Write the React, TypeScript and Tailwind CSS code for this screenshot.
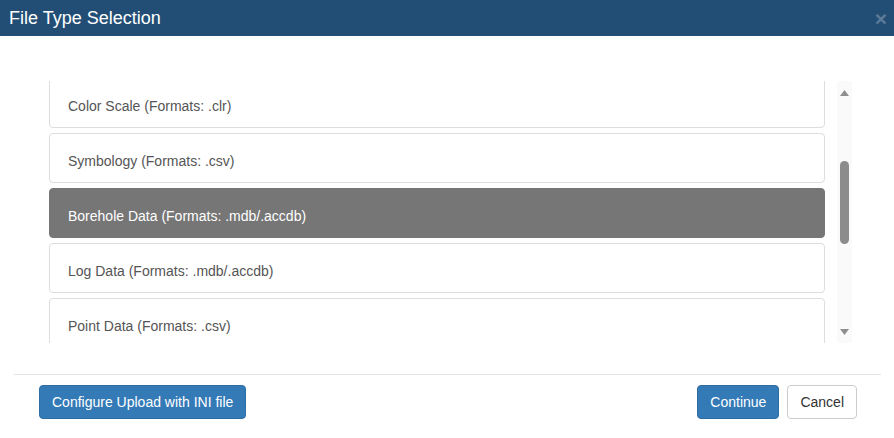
import React from "react"

const fileTypes = [
  { label: "Color Scale (Formats: .clr)" },
  { label: "Symbology (Formats: .csv)" },
  { label: "Borehole Data (Formats: .mdb/.accdb)", active: true },
  { label: "Log Data (Formats: .mdb/.accdb)" },
  { label: "Point Data (Formats: .csv)" },
]

function Arrow({ down }: { down?: boolean }) {
  return (
    <svg width="9" height="6" viewBox="0 0 9 6" className="block mx-auto">
      <polygon points={down ? "0,0 9,0 4.5,6" : "4.5,0 9,6 0,6"} fill="#8f8f8f" />
    </svg>
  )
}

export default function App() {
  return (
    <div className="w-[894px] h-[438px] bg-white flex flex-col font-['Liberation_Sans',Arial,sans-serif] overflow-hidden">
      {/* Header */}
      <div className="h-[36px] bg-[#224e75] flex items-center justify-between pl-[9px] pr-[7px] shrink-0">
        <h4 className="text-white text-[18px] leading-none">File Type Selection</h4>
        <button className="text-white opacity-25 text-[21px] font-bold leading-none">×</button>
      </div>

      {/* Body */}
      <div className="pt-[45px] pl-[49px] pr-[42px] flex gap-[12px]">
        <div className="w-[776px] h-[262px] overflow-hidden">
          <div className="-mt-[3px] flex flex-col gap-[5px]">
            {fileTypes.map((item, index) => (
              <div
                key={index}
                className={
                  item.active
                    ? "h-[50px] shrink-0 rounded-[4px] border border-[#767676] bg-[#767676] text-white text-[14px] pl-[18px] pt-[6px] flex items-center"
                    : "h-[50px] shrink-0 rounded-[4px] border border-[#dddddd] bg-white text-[#555555] text-[14px] pl-[18px] pt-[6px] flex items-center"
                }
              >
                {item.label}
              </div>
            ))}
          </div>
        </div>

        {/* Scrollbar */}
        <div className="w-[15px] h-[262px] bg-[#fafafa] flex flex-col pt-[9px] pb-[8px]">
          <Arrow />
          <div className="mt-[65px] mx-auto w-[9px] h-[83px] rounded-full bg-[#8c8c8c]"></div>
          <div className="flex-1"></div>
          <Arrow down />
        </div>
      </div>

      {/* Footer */}
      <div className="mt-[31px] ml-[14px] mr-[13px] border-t border-[#e5e5e5] pt-[10px] pl-[25px] pr-[24px] flex items-center justify-between">
        <button className="h-[34px] px-[12px] rounded-[4px] border border-[#2e6da4] bg-[#337ab7] text-white text-[14px]">
          Configure Upload with INI file
        </button>
        <div className="flex gap-[8px]">
          <button className="h-[34px] px-[12px] rounded-[4px] border border-[#2e6da4] bg-[#337ab7] text-white text-[14px]">
            Continue
          </button>
          <button className="h-[34px] px-[12px] rounded-[4px] border border-[#cccccc] bg-white text-[#333333] text-[14px]">
            Cancel
          </button>
        </div>
      </div>
    </div>
  )
}
